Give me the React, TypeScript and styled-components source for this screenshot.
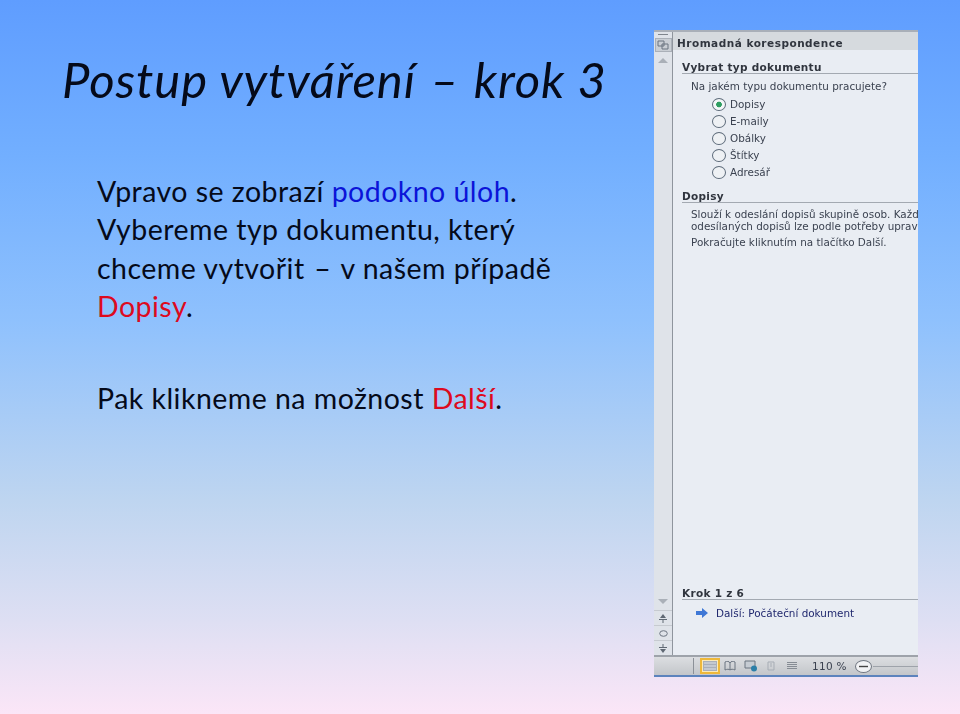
import React from 'react'
import styled, { createGlobalStyle } from 'styled-components'

const GlobalStyle = createGlobalStyle`
  html, body {
    margin: 0;
    padding: 0;
    width: 960px;
    height: 714px;
    overflow: hidden;
  }
`

const Slide = styled.div`
  width: 960px;
  height: 714px;
  display: flex;
  justify-content: space-between;
  box-sizing: border-box;
  padding: 30px 42px 37px 62px;
  background: linear-gradient(180deg, #5f9dff 0%, #72afff 22%, #8fc1fd 45%, #bed5f0 70%, #dedff3 87%, #fbe6f7 100%);
  font-family: 'Lato', 'Liberation Sans', sans-serif;
  color: #050a1a;
`

const TextColumn = styled.div`
  display: flex;
  flex-direction: column;
  width: 570px;
`

const Title = styled.h1`
  margin: 18px 0 0;
  font-size: 49px;
  line-height: 62px;
  font-weight: 400;
  font-style: italic;
  letter-spacing: 0.9px;
  white-space: nowrap;
`

const Body = styled.div`
  margin: 62px 0 0 35px;
  font-size: 28.5px;
  line-height: 38.4px;
  letter-spacing: 0.47px;
`

const Line = styled.div`
  white-space: nowrap;
`

const Gap = styled.div`
  height: 53px;
`

const Mark = styled.span<{ $tone: 'blue' | 'red' }>`
  color: ${(p) => (p.$tone === 'blue' ? '#0b14d8' : '#dd0a1e')};
`

const Dash = styled.span`
  margin: 0 2px;
`

const Shot = styled.div`
  width: 264px;
  height: 647px;
  display: flex;
  flex-direction: column;
  background: #e9edf3;
  overflow: hidden;
  font-family: 'DejaVu Sans', 'Liberation Sans', sans-serif;
  color: #3b4250;
  filter: blur(0.4px);
`

const ShotMain = styled.div`
  flex: 1;
  display: flex;
  min-height: 0;
  border-top: 2px solid #a9afb8;
`

const Rail = styled.div`
  width: 19px;
  flex: none;
  display: flex;
  flex-direction: column;
  align-items: center;
  background: #dfe3e9;
  border-right: 1px solid #8f959d;
  box-sizing: border-box;
`

const RailGrip = styled.div`
  width: 10px;
  height: 1px;
  margin-top: 2px;
  background: #7f858d;
`

const RailTool = styled.div`
  width: 17px;
  height: 14px;
  margin-top: 3px;
  display: flex;
  align-items: center;
  justify-content: center;
  background: #c9ced4;
  border: 1px solid #aab0b8;
  box-sizing: border-box;
`

const RailArrow = styled.svg<{ $gap: 'top' | 'bottom' }>`
  width: 12px;
  height: 6px;
  flex: none;
  margin: ${(p) => (p.$gap === 'top' ? '6px 0 0' : '0 0 5px')};
`

const RailSpacer = styled.div`
  flex: 1;
`

const RailButton = styled.div`
  width: 100%;
  height: 15px;
  display: flex;
  align-items: center;
  justify-content: center;
  border-top: 1px solid #c6cad0;
  box-sizing: border-box;
`

const Pane = styled.div`
  flex: 1;
  min-width: 0;
  display: flex;
  flex-direction: column;
  overflow: hidden;
`

const PaneHeader = styled.div`
  height: 18px;
  flex: none;
  box-sizing: border-box;
  padding: 5px 0 0 4px;
  background: #d6dade;
  font-size: 10.5px;
  line-height: 13px;
  font-weight: 700;
  color: #30353e;
  letter-spacing: 0.5px;
  white-space: nowrap;
`

const Section = styled.div<{ $top: number }>`
  margin: ${(p) => p.$top}px 0 0 9px;
  border-bottom: 1px solid #a3a9b1;
  font-size: 10.5px;
  line-height: 11px;
  font-weight: 700;
  color: #30353e;
  letter-spacing: 0.3px;
  white-space: nowrap;
`

const Para = styled.p<{ $top: number }>`
  margin: ${(p) => p.$top}px 0 0 18px;
  font-size: 10.4px;
  line-height: 12px;
  white-space: nowrap;
`

const Options = styled.div`
  display: flex;
  flex-direction: column;
  gap: 3px;
  margin: 5px 0 0 39px;
`

const Option = styled.div`
  display: flex;
  align-items: center;
  gap: 4px;
  height: 14px;
  font-size: 10.4px;
`

const Radio = styled.span<{ $on?: boolean }>`
  width: 14px;
  height: 13px;
  box-sizing: border-box;
  border: 1px solid #5d6b7a;
  border-radius: 50%;
  background: ${(p) => (p.$on ? 'radial-gradient(circle, #2f9e62 0 2.5px, #f4f7f8 3.2px)' : '#eef1f4')};
`

const PaneSpacer = styled.div`
  flex: 1;
`

const NextLink = styled.div`
  display: flex;
  align-items: center;
  gap: 8px;
  margin: 7px 0 36px 23px;
  height: 12px;
  font-size: 10.4px;
  color: #20286e;
  white-space: nowrap;
`

const StatusBar = styled.div`
  height: 22px;
  flex: none;
  box-sizing: border-box;
  display: flex;
  align-items: center;
  gap: 0.5px;
  padding-left: 39px;
  background: linear-gradient(180deg, #dcdee1, #c3c6ca);
  border-top: 2px solid #9ea3aa;
  border-bottom: 2px solid #5c83bd;
  font-size: 10.5px;
  letter-spacing: 0.3px;
  white-space: nowrap;
`

const StatusDivider = styled.span`
  width: 1px;
  height: 16px;
  margin-right: 5px;
  background: #8c9198;
`

const ViewButton = styled.div<{ $on?: boolean }>`
  width: 20px;
  height: 16px;
  flex: none;
  display: flex;
  align-items: center;
  justify-content: center;
  box-sizing: border-box;
  border: ${(p) => (p.$on ? '2px solid #eeb83a' : '2px solid transparent')};
  background: ${(p) => (p.$on ? '#fbeab8' : 'transparent')};
`

const ZoomValue = styled.span`
  margin-left: 10px;
`

const ZoomOut = styled.span`
  width: 17px;
  height: 13px;
  margin-left: 8px;
  flex: none;
  position: relative;
  z-index: 1;
  display: flex;
  align-items: center;
  justify-content: center;
  box-sizing: border-box;
  border: 1px solid #6f7680;
  border-radius: 50%;
  background: #f1f2f4;
`

const ZoomTrack = styled.span`
  flex: 1;
  height: 1px;
  background: #9ea3aa;
`

const Icon = ({ d, stroke = '#6b7480' }: { d: string; stroke?: string }) => (
  <svg width="12" height="10" viewBox="0 0 12 10" fill="none" stroke={stroke} strokeWidth="1">
    <path d={d} />
  </svg>
)

const options = ['Dopisy', 'E-maily', 'Obálky', 'Štítky', 'Adresář']

export default function App() {
  return (
    <Slide>
      <GlobalStyle />
      <TextColumn>
        <Title>
          Postup vytváření <Dash>–</Dash> krok 3
        </Title>
        <Body>
          <Line>
            Vpravo se zobrazí <Mark $tone="blue">podokno úloh</Mark>.
          </Line>
          <Line>Vybereme typ dokumentu, který</Line>
          <Line>
            chceme vytvořit <Dash>–</Dash> v našem případě
          </Line>
          <Line>
            <Mark $tone="red">Dopisy</Mark>.
          </Line>
          <Gap />
          <Line>
            Pak klikneme na možnost <Mark $tone="red">Další</Mark>.
          </Line>
        </Body>
      </TextColumn>
      <Shot>
        <ShotMain>
          <Rail>
            <RailGrip />
            <RailTool>
              <Icon d="M1 1h6v5H1zM5 4h6v5H5z" />
            </RailTool>
            <RailArrow $gap="top" viewBox="0 0 12 6">
              <path d="M6 0l5 5H1z" fill="#aab0b8" />
            </RailArrow>
            <RailSpacer />
            <RailArrow $gap="bottom" viewBox="0 0 12 6">
              <path d="M1 0h10L6 5z" fill="#aab0b8" />
            </RailArrow>
            <RailButton>
              <svg width="10" height="9" viewBox="0 0 10 9">
                <path d="M5 0L8 4H2zM1 5h8v1H1zM4.500 6h1v3h-1z" fill="#5f6873" />
              </svg>
            </RailButton>
            <RailButton>
              <svg width="9" height="7" viewBox="0 0 9 7">
                <ellipse cx="4.500" cy="3.500" rx="3.800" ry="2.800" fill="none" stroke="#6b7480" />
              </svg>
            </RailButton>
            <RailButton>
              <svg width="10" height="9" viewBox="0 0 10 9">
                <path d="M4.500 0h1v3h-1zM1 3h8v1H1zM2 5h6L5 9z" fill="#5f6873" />
              </svg>
            </RailButton>
          </Rail>
          <Pane>
            <PaneHeader>Hromadná korespondence</PaneHeader>
            <Section $top={12}>Vybrat typ dokumentu</Section>
            <Para $top={6}>Na jakém typu dokumentu pracujete?</Para>
            <Options>
              {options.map((label, i) => (
                <Option key={label}>
                  <Radio $on={i === 0} />
                  {label}
                </Option>
              ))}
            </Options>
            <Section $top={12}>Dopisy</Section>
            <Para $top={5}>
              Slouží k odeslání dopisů skupině osob. Každý z
              <br />
              odesílaných dopisů lze podle potřeby upravit.
            </Para>
            <Para $top={4}>Pokračujte kliknutím na tlačítko Další.</Para>
            <PaneSpacer />
            <Section $top={0}>Krok 1 z 6</Section>
            <NextLink>
              <svg width="12" height="10" viewBox="0 0 12 10">
                <path d="M0 3h6V0l6 5-6 5V7H0z" fill="#3f78d6" />
              </svg>
              Další: Počáteční dokument
            </NextLink>
          </Pane>
        </ShotMain>
        <StatusBar>
          <StatusDivider />
          <ViewButton $on>
            <svg width="14" height="10" viewBox="0 0 14 10">
              <path d="M0 0h14v10H0z" fill="#a9afb8" />
              <path d="M1 2h12M1 5h12M1 8h12" stroke="#dfe2e6" strokeWidth="1" />
            </svg>
          </ViewButton>
          <ViewButton>
            <Icon d="M1 1c2-1 4-1 5 1c1-2 3-2 5-1v8c-2-1-4-1-5 0c-1-1-3-1-5 0zM6 2v7" />
          </ViewButton>
          <ViewButton>
            <svg width="14" height="12" viewBox="0 0 14 12">
              <path d="M1 1h10v7H1z" fill="#c6ccd3" stroke="#6b7480" />
              <circle cx="10" cy="8.500" r="3" fill="#2c7fa8" />
            </svg>
          </ViewButton>
          <ViewButton>
            <Icon d="M3 1h6v8H3zM5 3h2M5 5h2" stroke="#a7adb5" />
          </ViewButton>
          <ViewButton>
            <Icon d="M1 1.500h10M1 3.500h10M1 5.500h10M1 7.500h10" stroke="#868c94" />
          </ViewButton>
          <ZoomValue>110 %</ZoomValue>
          <ZoomOut>
            <svg width="9" height="3" viewBox="0 0 9 3">
              <path d="M0 1.500h9" stroke="#444" strokeWidth="1.400" />
            </svg>
          </ZoomOut>
          <ZoomTrack />
        </StatusBar>
      </Shot>
    </Slide>
  )
}
